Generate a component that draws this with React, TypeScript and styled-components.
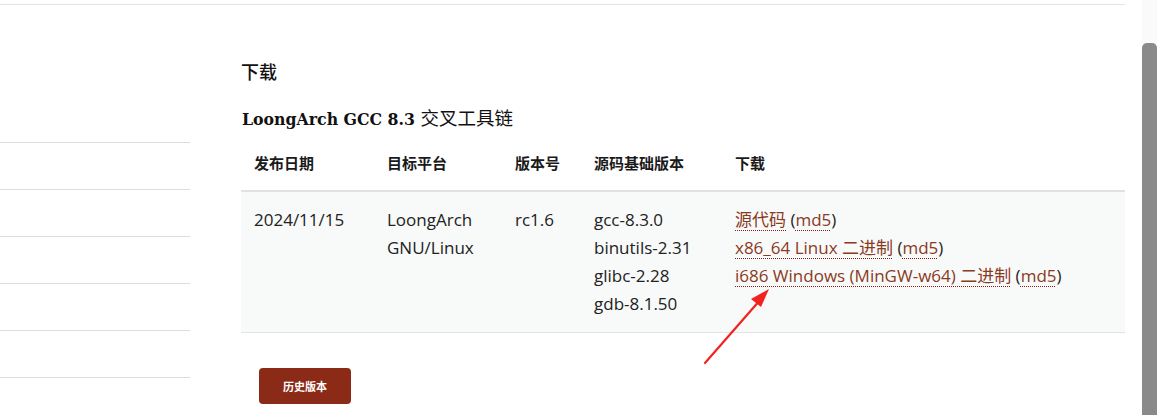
import React from 'react'
import styled, { createGlobalStyle } from 'styled-components';

const GlobalStyle = createGlobalStyle`
    html, body {
        margin: 0;
        padding: 0;
        background: #fff;
        overflow: hidden;
    }
    body {
        font-family: "Open Sans", "Noto Sans CJK SC", sans-serif;
        color: #222;
    }
`;

interface Release {
    date: string;
    platform: string[];
    version: string;
    sources: string[];
}

const release: Release = {
    date: "2024/11/15",
    platform: ["LoongArch", "GNU/Linux"],
    version: "rc1.6",
    sources: ["gcc-8.3.0", "binutils-2.31", "glibc-2.28", "gdb-8.1.50"],
};

const downloads = ["源代码", "x86_64 Linux 二进制", "i686 Windows (MinGW-w64) 二进制"];

const sideItems = [0, 1, 2, 3, 4, 5];

const App = () => {
    return (
        <>
            <GlobalStyle />
            <Window>
                <Page>
                    <TopRule />
                    <Body>
                        <Sidebar>
                            {sideItems.map((i) => (
                                <SideItem key={i} />
                            ))}
                        </Sidebar>
                        <Main>
                            <SectionTitle>下载</SectionTitle>
                            <SubTitle>
                                LoongArch GCC 8.3 <CjkPart>交叉工具链</CjkPart>
                            </SubTitle>
                            <TableWrap>
                                <Table>
                                    <thead>
                                        <tr>
                                            <Th $width={107}>发布日期</Th>
                                            <Th $width={102}>目标平台</Th>
                                            <Th $width={53}>版本号</Th>
                                            <Th $width={115}>源码基础版本</Th>
                                            <Th>下载</Th>
                                        </tr>
                                    </thead>
                                    <tbody>
                                        <Tr>
                                            <Td>{release.date}</Td>
                                            <Td>
                                                {release.platform.map((p) => (
                                                    <Line key={p}>{p}</Line>
                                                ))}
                                            </Td>
                                            <Td>{release.version}</Td>
                                            <Td>
                                                {release.sources.map((s) => (
                                                    <Line key={s}>{s}</Line>
                                                ))}
                                            </Td>
                                            <Td>
                                                {downloads.map((d) => (
                                                    <Line key={d}>
                                                        <Link>{d}</Link> (<Link>md5</Link>)
                                                    </Line>
                                                ))}
                                            </Td>
                                        </Tr>
                                    </tbody>
                                </Table>
                                <Arrow width="80" height="90" viewBox="0 0 80 90">
                                    <line x1="4" y1="84" x2="60" y2="20" stroke="#f2231f" strokeWidth="2.2" strokeLinecap="round" />
                                    <polygon points="68,10 50,20 60,28" fill="#f2231f" />
                                </Arrow>
                            </TableWrap>
                            <HistoryButton>历史版本</HistoryButton>
                        </Main>
                    </Body>
                </Page>
                <ScrollTrack>
                    <ScrollThumb />
                </ScrollTrack>
            </Window>
        </>
    )
}

export default App;

const Window = styled.div`
    display: flex;
    width: 1157px;
    height: 415px;
    overflow: hidden;
`;

const Page = styled.div`
    flex: 1;
    display: flex;
    flex-direction: column;
    min-width: 0;
`;

const TopRule = styled.div`
    flex-shrink: 0;
    width: 1125px;
    height: 4px;
    border-bottom: 1px solid #e3e3e3;
`;

const Body = styled.div`
    flex: 1;
    min-height: 0;
    overflow: hidden;
    display: flex;
    gap: 51px;
`;

const Sidebar = styled.div`
    width: 190px;
    padding-top: 137px;
    display: flex;
    flex-direction: column;
`;

const SideItem = styled.div`
    height: 46px;
    flex-shrink: 0;
    border-top: 1px solid #dddddd;
`;

const Main = styled.div`
    width: 884px;
    padding-top: 53px;
`;

const SectionTitle = styled.h2`
    margin: 0;
    font-family: "Noto Sans CJK SC", serif;
    font-weight: 500;
    font-size: 18px;
    line-height: 26px;
    color: #111;
`;

const SubTitle = styled.h3`
    margin: 20px 0 0 1px;
    font-family: "DejaVu Serif", serif;
    font-stretch: semi-condensed;
    font-weight: bold;
    font-size: 17.5px;
    line-height: 26px;
    color: #111;
`;

const CjkPart = styled.span`
    font-family: "Noto Sans CJK SC", sans-serif;
    font-weight: normal;
    font-size: 18.5px;
`;

const TableWrap = styled.div`
    position: relative;
    margin-top: 9px;
`;

const Table = styled.table`
    width: 884px;
    border-collapse: collapse;
    table-layout: fixed;
`;

const Th = styled.th<{ $width?: number }>`
    width: ${(p) => (p.$width ? `${p.$width}px` : 'auto')};
    text-align: left;
    padding: 10px 13px 15px;
    font-size: 15px;
    line-height: 24px;
    font-weight: bold;
    color: #1a1a1a;
    border-bottom: 2px solid #dfe2e5;
`;

const Tr = styled.tr`
    background: #f8f9f9;
    border-bottom: 1px solid #e1e3e5;
`;

const Td = styled.td`
    vertical-align: top;
    padding: 14px 13px;
    font-size: 17px;
    line-height: 28px;
    color: #222;
    white-space: nowrap;
`;

const Line = styled.div`
    line-height: 28px;
`;

const Link = styled.a`
    color: #8b3a1e;
    text-decoration: underline dotted #8b1a1a;
    text-underline-offset: 4px;
    text-decoration-thickness: 1px;
`;

const Arrow = styled.svg`
    position: absolute;
    left: 460px;
    top: 138px;
`;

const HistoryButton = styled.button`
    margin: 35px 0 0 18px;
    width: 92px;
    height: 36px;
    border: none;
    border-radius: 4px;
    background: #8b2a17;
    color: #fff;
    font-family: "Noto Sans CJK SC", sans-serif;
    font-size: 11px;
    font-weight: bold;
    cursor: pointer;
`;

const ScrollTrack = styled.div`
    flex-shrink: 0;
    width: 15px;
    margin-left: 17px;
    background: #fafafa;
    display: flex;
    justify-content: center;
    padding-top: 43px;
`;

const ScrollThumb = styled.div`
    width: 10px;
    flex: 1;
    background: #8a8a8a;
    border-radius: 5px 5px 0 0;
`;
